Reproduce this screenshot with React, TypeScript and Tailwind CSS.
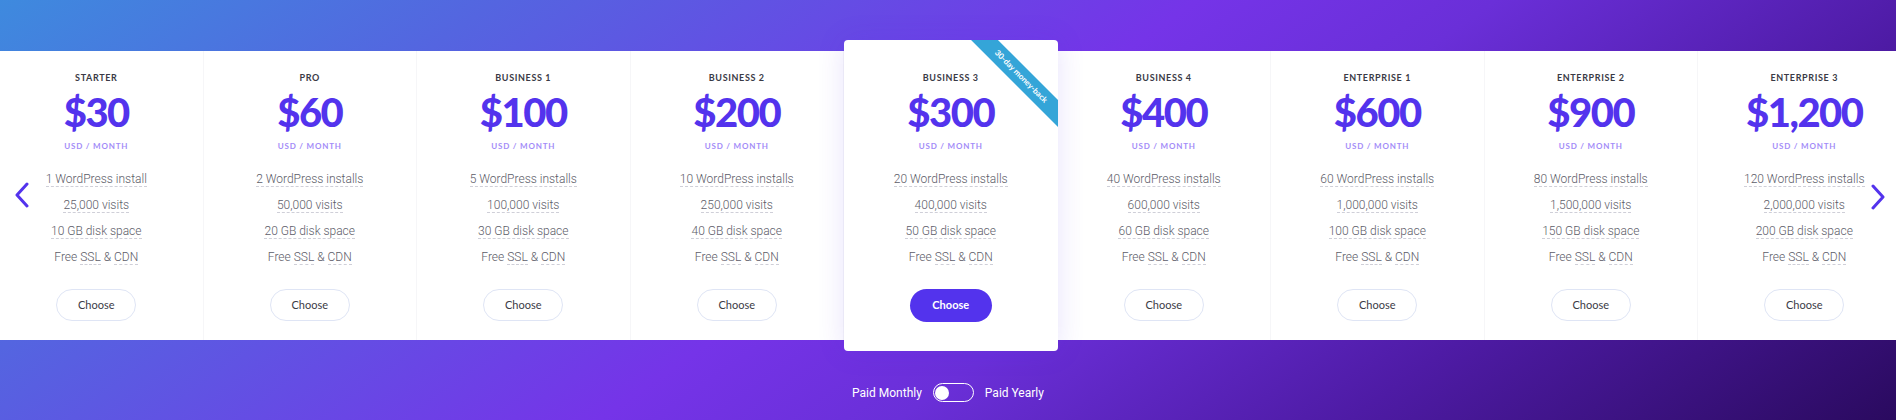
import React from "react";

type Plan = {
  name: string;
  price: string;
  installs: string;
  visits: string;
  disk: string;
  featured?: boolean;
};

const plans: Plan[] = [
  { name: "Starter", price: "$30", installs: "1 WordPress install", visits: "25,000 visits", disk: "10 GB disk space" },
  { name: "Pro", price: "$60", installs: "2 WordPress installs", visits: "50,000 visits", disk: "20 GB disk space" },
  { name: "Business 1", price: "$100", installs: "5 WordPress installs", visits: "100,000 visits", disk: "30 GB disk space" },
  { name: "Business 2", price: "$200", installs: "10 WordPress installs", visits: "250,000 visits", disk: "40 GB disk space" },
  { name: "Business 3", price: "$300", installs: "20 WordPress installs", visits: "400,000 visits", disk: "50 GB disk space", featured: true },
  { name: "Business 4", price: "$400", installs: "40 WordPress installs", visits: "600,000 visits", disk: "60 GB disk space" },
  { name: "Enterprise 1", price: "$600", installs: "60 WordPress installs", visits: "1,000,000 visits", disk: "100 GB disk space" },
  { name: "Enterprise 2", price: "$900", installs: "80 WordPress installs", visits: "1,500,000 visits", disk: "150 GB disk space" },
  { name: "Enterprise 3", price: "$1,200", installs: "120 WordPress installs", visits: "2,000,000 visits", disk: "200 GB disk space" },
];

const dashed = "border-b border-dashed border-[#cfcfd8]";

function PlanBody({ plan }: { plan: Plan }) {
  return (
    <>
      <div className="text-[9px] leading-[12px] font-bold uppercase tracking-[0.07em] text-[#3a3a45]">
        {plan.name}
      </div>
      <div className="mt-[8px] text-[40px] leading-[40px] font-black tracking-[-1.5px] text-[#5333ed]">
        {plan.price}
      </div>
      <div className="mt-[9px] text-[8px] leading-[10px] font-bold uppercase tracking-[0.1em] text-[#a38cf8]">
        USD / Month
      </div>

      {/* features */}
      <ul className="mt-[21px] flex flex-col items-center gap-[11px] font-['Roboto',sans-serif] text-[12px] leading-[14px] font-light text-[#5c5c68]">
        <li className={dashed}>{plan.installs}</li>
        <li className={dashed}>{plan.visits}</li>
        <li className={dashed}>{plan.disk}</li>
        <li>
          Free <span className={dashed}>SSL</span> &amp; <span className={dashed}>CDN</span>
        </li>
      </ul>

      <button
        type="button"
        className={
          plan.featured
            ? "mt-[25px] h-[33px] w-[82px] rounded-full bg-[#5333ed] text-[11px] font-bold text-white"
            : "mt-[25px] h-[32px] w-[80px] rounded-full border border-[#dfe5f5] bg-white text-[11px] font-normal text-[#3b3b46]"
        }
      >
        Choose
      </button>
    </>
  );
}

export default function App() {
  return (
    <div className="relative h-[420px] w-full overflow-hidden bg-[linear-gradient(145deg,#3e8ade_0%,#5465e0_20%,#7534e8_48%,#6a2fd8_60%,#4e1ba5_78%,#2a0a5f_100%)] font-['Lato',sans-serif]">
      {/* plans band */}
      <div className="relative mt-[51px] h-[289px] bg-white">
        <div className="-ml-[10px] flex h-full">
          {plans.map((plan) =>
            plan.featured ? (
              <div
                key={plan.name}
                className="relative z-10 -my-[11px] flex w-[213.5px] shrink-0 flex-col items-center overflow-hidden rounded-[4px] bg-white pt-[32px] shadow-[0_0_28px_rgba(83,51,237,0.14)]"
              >
                <div className="absolute right-[-38px] top-[27px] w-[150px] rotate-45 bg-[#34a5d8] text-center text-[8px] leading-[19px] font-bold text-white">
                  30-day money-back
                </div>
                <PlanBody plan={plan} />
              </div>
            ) : (
              <div
                key={plan.name}
                className="flex w-[213.5px] shrink-0 flex-col items-center border-r border-[#f6f6f8] pt-[21px]"
              >
                <PlanBody plan={plan} />
              </div>
            )
          )}
        </div>

        {/* slider arrows */}
        <button type="button" aria-label="Previous" className="absolute left-[14px] top-[131px] z-20">
          <svg width="16" height="26" viewBox="0 0 16 26" fill="none">
            <path d="M13 2 3 13l10 11" stroke="#5333ed" strokeWidth="3" strokeLinecap="round" strokeLinejoin="round" />
          </svg>
        </button>
        <button type="button" aria-label="Next" className="absolute right-[10px] top-[133px] z-20">
          <svg width="16" height="26" viewBox="0 0 16 26" fill="none">
            <path d="M3 2l10 11L3 24" stroke="#5333ed" strokeWidth="3" strokeLinecap="round" strokeLinejoin="round" />
          </svg>
        </button>
      </div>

      {/* billing toggle */}
      <div className="mt-[43px] flex items-center justify-center gap-[11px] font-['Roboto',sans-serif] text-[12px] text-white">
        <span>Paid Monthly</span>
        <span className="flex h-[19px] w-[41px] items-center rounded-full border border-white px-[1px]">
          <span className="h-[14px] w-[14px] rounded-full bg-white" />
        </span>
        <span>Paid Yearly</span>
      </div>
    </div>
  );
}
